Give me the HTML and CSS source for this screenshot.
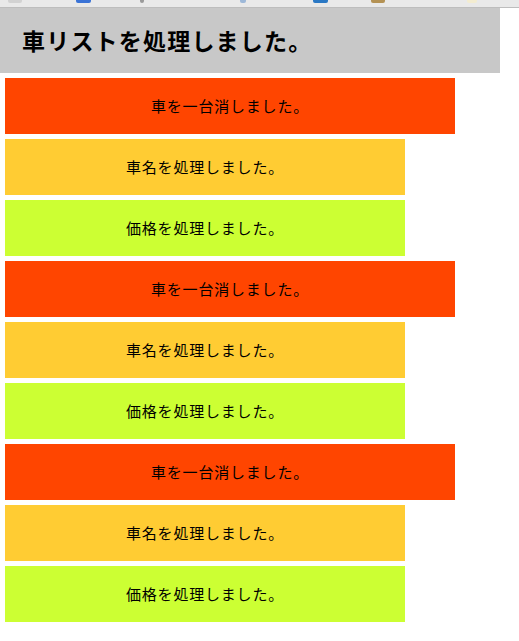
FILE: index.html
```html
<!DOCTYPE html>
<html lang="ja">
<head>
<meta charset="utf-8">
<title>車リスト</title>
<link rel="stylesheet" href="styles.css">
</head>
<body>
<div class="chrome">
  <span class="ic ic-gray"></span>
  <span class="ic ic-blue"></span>
  <span class="ic ic-dot"></span>
  <span class="ic ic-lblue"></span>
  <span class="ic ic-blue2"></span>
  <span class="ic ic-brown"></span>
  <span class="ic ic-pale"></span>
</div>
<header class="header">
  <h1 class="title">車リストを処理しました。</h1>
</header>
<ul class="list">
  <li class="item item-del">車を一台消しました。</li>
  <li class="item item-name">車名を処理しました。</li>
  <li class="item item-price">価格を処理しました。</li>
  <li class="item item-del">車を一台消しました。</li>
  <li class="item item-name">車名を処理しました。</li>
  <li class="item item-price">価格を処理しました。</li>
  <li class="item item-del">車を一台消しました。</li>
  <li class="item item-name">車名を処理しました。</li>
  <li class="item item-price">価格を処理しました。</li>
</ul>
</body>
</html>
```
FILE: styles.css
```css
html, body {
  margin: 0;
  padding: 0;
  background: #ffffff;
  font-family: "Noto Sans CJK JP", "Noto Sans", sans-serif;
  color: #000;
}

.chrome {
  height: 7px;
  background: #e9e9e9;
  border-bottom: 1px solid #bdbdbd;
  position: relative;
  overflow: hidden;
}

.ic {
  position: absolute;
  top: -4px;
  height: 7px;
  border-radius: 2px;
}
.ic-gray { left: 8px; width: 14px; background: #d2d2d2; }
.ic-blue { left: 76px; width: 15px; background: #3a73d6; }
.ic-dot { left: 140px; width: 4px; background: #9a9a9a; }
.ic-lblue { left: 240px; width: 6px; background: #9db8d8; }
.ic-blue2 { left: 313px; width: 15px; background: #2a78c4; }
.ic-brown { left: 371px; width: 14px; background: #b49254; }
.ic-pale { left: 467px; width: 10px; background: #f3ecd0; }

.header {
  width: 500px;
  height: 65px;
  background: #c8c8c8;
  display: flex;
  align-items: center;
  padding-left: 22px;
  box-sizing: border-box;
}

.title {
  margin: 0;
  font-size: 23px;
  font-weight: bold;
  letter-spacing: 1.2px;
  line-height: 1;
}

.list {
  list-style: none;
  margin: 5px 0 0 5px;
  padding: 0;
  display: flex;
  flex-direction: column;
  gap: 5px;
}

.item {
  height: 56px;
  display: flex;
  align-items: center;
  justify-content: center;
  font-size: 15px;
  line-height: 1;
  letter-spacing: 0.8px;
  padding-bottom: 2px;
  box-sizing: border-box;
}

.item-del { width: 450px; background: #ff4500; }
.item-name { width: 400px; background: #ffcc33; }
.item-price { width: 400px; background: #ccff33; }
```
